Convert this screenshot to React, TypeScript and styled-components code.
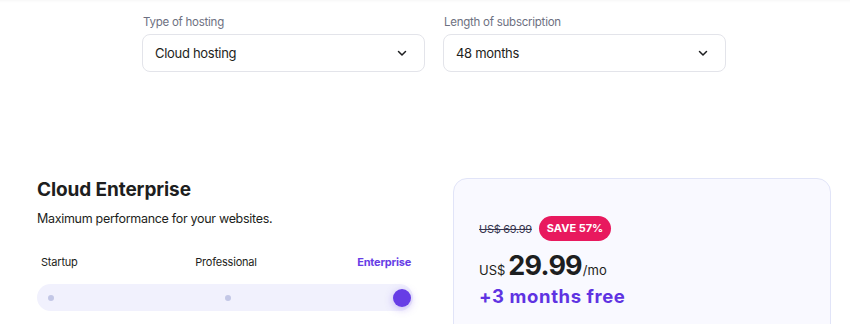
import React from "react";
import styled, { createGlobalStyle } from "styled-components";

const GlobalStyle = createGlobalStyle`
  body {
    margin: 0;
    background: #ffffff;
    font-family: Inter, "Noto Sans", sans-serif;
    color: #1d1e20;
  }
`;

const Page = styled.div`
  width: 850px;
  height: 324px;
  overflow: hidden;
  box-shadow: inset 0 3px 3px -2px rgba(0, 0, 0, 0.04);
`;

const Filters = styled.div`
  display: flex;
  gap: 18px;
  padding: 15px 0 0 142px;
`;

const Field = styled.div`
  display: flex;
  flex-direction: column;
  width: 283px;
`;

const FieldLabel = styled.label`
  font-size: 11.5px;
  letter-spacing: -0.25px;
  color: #6d7081;
  margin: 0 0 5px 1px;
  line-height: 14px;
`;

const SelectBox = styled.div`
  height: 38px;
  box-sizing: border-box;
  border: 1px solid #e3e4ea;
  border-radius: 8px;
  display: flex;
  align-items: center;
  justify-content: space-between;
  padding: 0 16px 0 12px;
  font-size: 13px;
  letter-spacing: -0.3px;
  color: #1d1e20;
`;

const Plan = styled.div`
  display: flex;
  gap: 40px;
  padding: 106px 0 0 37px;
`;

const Info = styled.div`
  width: 376px;
  display: flex;
  flex-direction: column;
`;

const Title = styled.h2`
  margin: 0;
  font-size: 19px;
  font-weight: 700;
  line-height: 24px;
  letter-spacing: -0.1px;
`;

const Subtitle = styled.p`
  margin: 8px 0 0;
  font-size: 12.5px;
  letter-spacing: -0.3px;
  line-height: 18px;
`;

const Tiers = styled.div`
  display: grid;
  grid-template-columns: 1fr auto 1fr;
  padding: 0 2px 0 4px;
  margin-top: 27px;
`;

const Tier = styled.span<{ $active?: boolean; $end?: boolean }>`
  font-size: 11px;
  line-height: 14px;
  letter-spacing: -0.2px;
  justify-self: ${(p) => (p.$end ? "end" : "start")};
  font-weight: ${(p) => (p.$active ? 700 : 400)};
  color: ${(p) => (p.$active ? "#673de6" : "#1d1e20")};
`;

const Track = styled.div`
  margin-top: 15px;
  height: 27px;
  border-radius: 14px;
  background: #f1f1fd;
  display: grid;
  grid-template-columns: 1fr auto 1fr;
  align-items: center;
  padding: 0 5px 0 11px;
`;

const Dot = styled.span`
  width: 6px;
  height: 6px;
  border-radius: 50%;
  background: #c3c7e6;
`;

const Knob = styled.span`
  justify-self: end;
  width: 18px;
  height: 18px;
  border-radius: 50%;
  background: #673de6;
  box-shadow: 0 2px 8px rgba(103, 61, 230, 0.35);
  margin-right: -3px;
`;

const Card = styled.div`
  width: 378px;
  height: 200px;
  box-sizing: border-box;
  border: 1px solid #e1e4f8;
  border-radius: 14px;
  background: #f9f9ff;
  padding: 37px 25px 0;
`;

const OldRow = styled.div`
  display: flex;
  align-items: center;
  gap: 7px;
`;

const OldPrice = styled.span`
  font-size: 11px;
  letter-spacing: -0.3px;
  color: #36344d;
  text-decoration: line-through;
`;

const Badge = styled.span`
  background: #e8195e;
  color: #ffffff;
  font-size: 11px;
  font-weight: 700;
  border-radius: 13px;
  padding: 0 8px;
  height: 25px;
  line-height: 25px;
`;

const PriceRow = styled.div`
  display: flex;
  align-items: baseline;
  margin-top: 9px;
  line-height: 32px;
`;

const Currency = styled.span`
  font-size: 13px;
  margin-right: 3px;
`;

const Amount = styled.span`
  font-size: 27px;
  font-weight: 700;
  letter-spacing: -0.8px;
`;

const Per = styled.span`
  font-size: 13px;
  margin-left: 1px;
`;

const Bonus = styled.div`
  font-size: 18.5px;
  font-weight: 700;
  letter-spacing: 0.6px;
  color: #5f33e2;
  line-height: 20px;
`;

const Chevron = () => (
  <svg width="12" height="12" viewBox="0 0 24 24" fill="none" stroke="#1d1e20" strokeWidth="3" strokeLinecap="round" strokeLinejoin="round">
    <path d="M5 9l7 7 7-7" />
  </svg>
);

export default function App() {
  return (
    <Page>
      <GlobalStyle />
      <Filters>
        <Field>
          <FieldLabel>Type of hosting</FieldLabel>
          <SelectBox>
            Cloud hosting
            <Chevron />
          </SelectBox>
        </Field>
        <Field>
          <FieldLabel>Length of subscription</FieldLabel>
          <SelectBox>
            48 months
            <Chevron />
          </SelectBox>
        </Field>
      </Filters>
      <Plan>
        <Info>
          <Title>Cloud Enterprise</Title>
          <Subtitle>Maximum performance for your websites.</Subtitle>
          <Tiers>
            <Tier>Startup</Tier>
            <Tier>Professional</Tier>
            <Tier $active $end>Enterprise</Tier>
          </Tiers>
          <Track>
            <Dot />
            <Dot />
            <Knob />
          </Track>
        </Info>
        <Card>
          <OldRow>
            <OldPrice>US$ 69.99</OldPrice>
            <Badge>SAVE 57%</Badge>
          </OldRow>
          <PriceRow>
            <Currency>US$</Currency>
            <Amount>29.99</Amount>
            <Per>/mo</Per>
          </PriceRow>
          <Bonus>+3 months free</Bonus>
        </Card>
      </Plan>
    </Page>
  );
}
